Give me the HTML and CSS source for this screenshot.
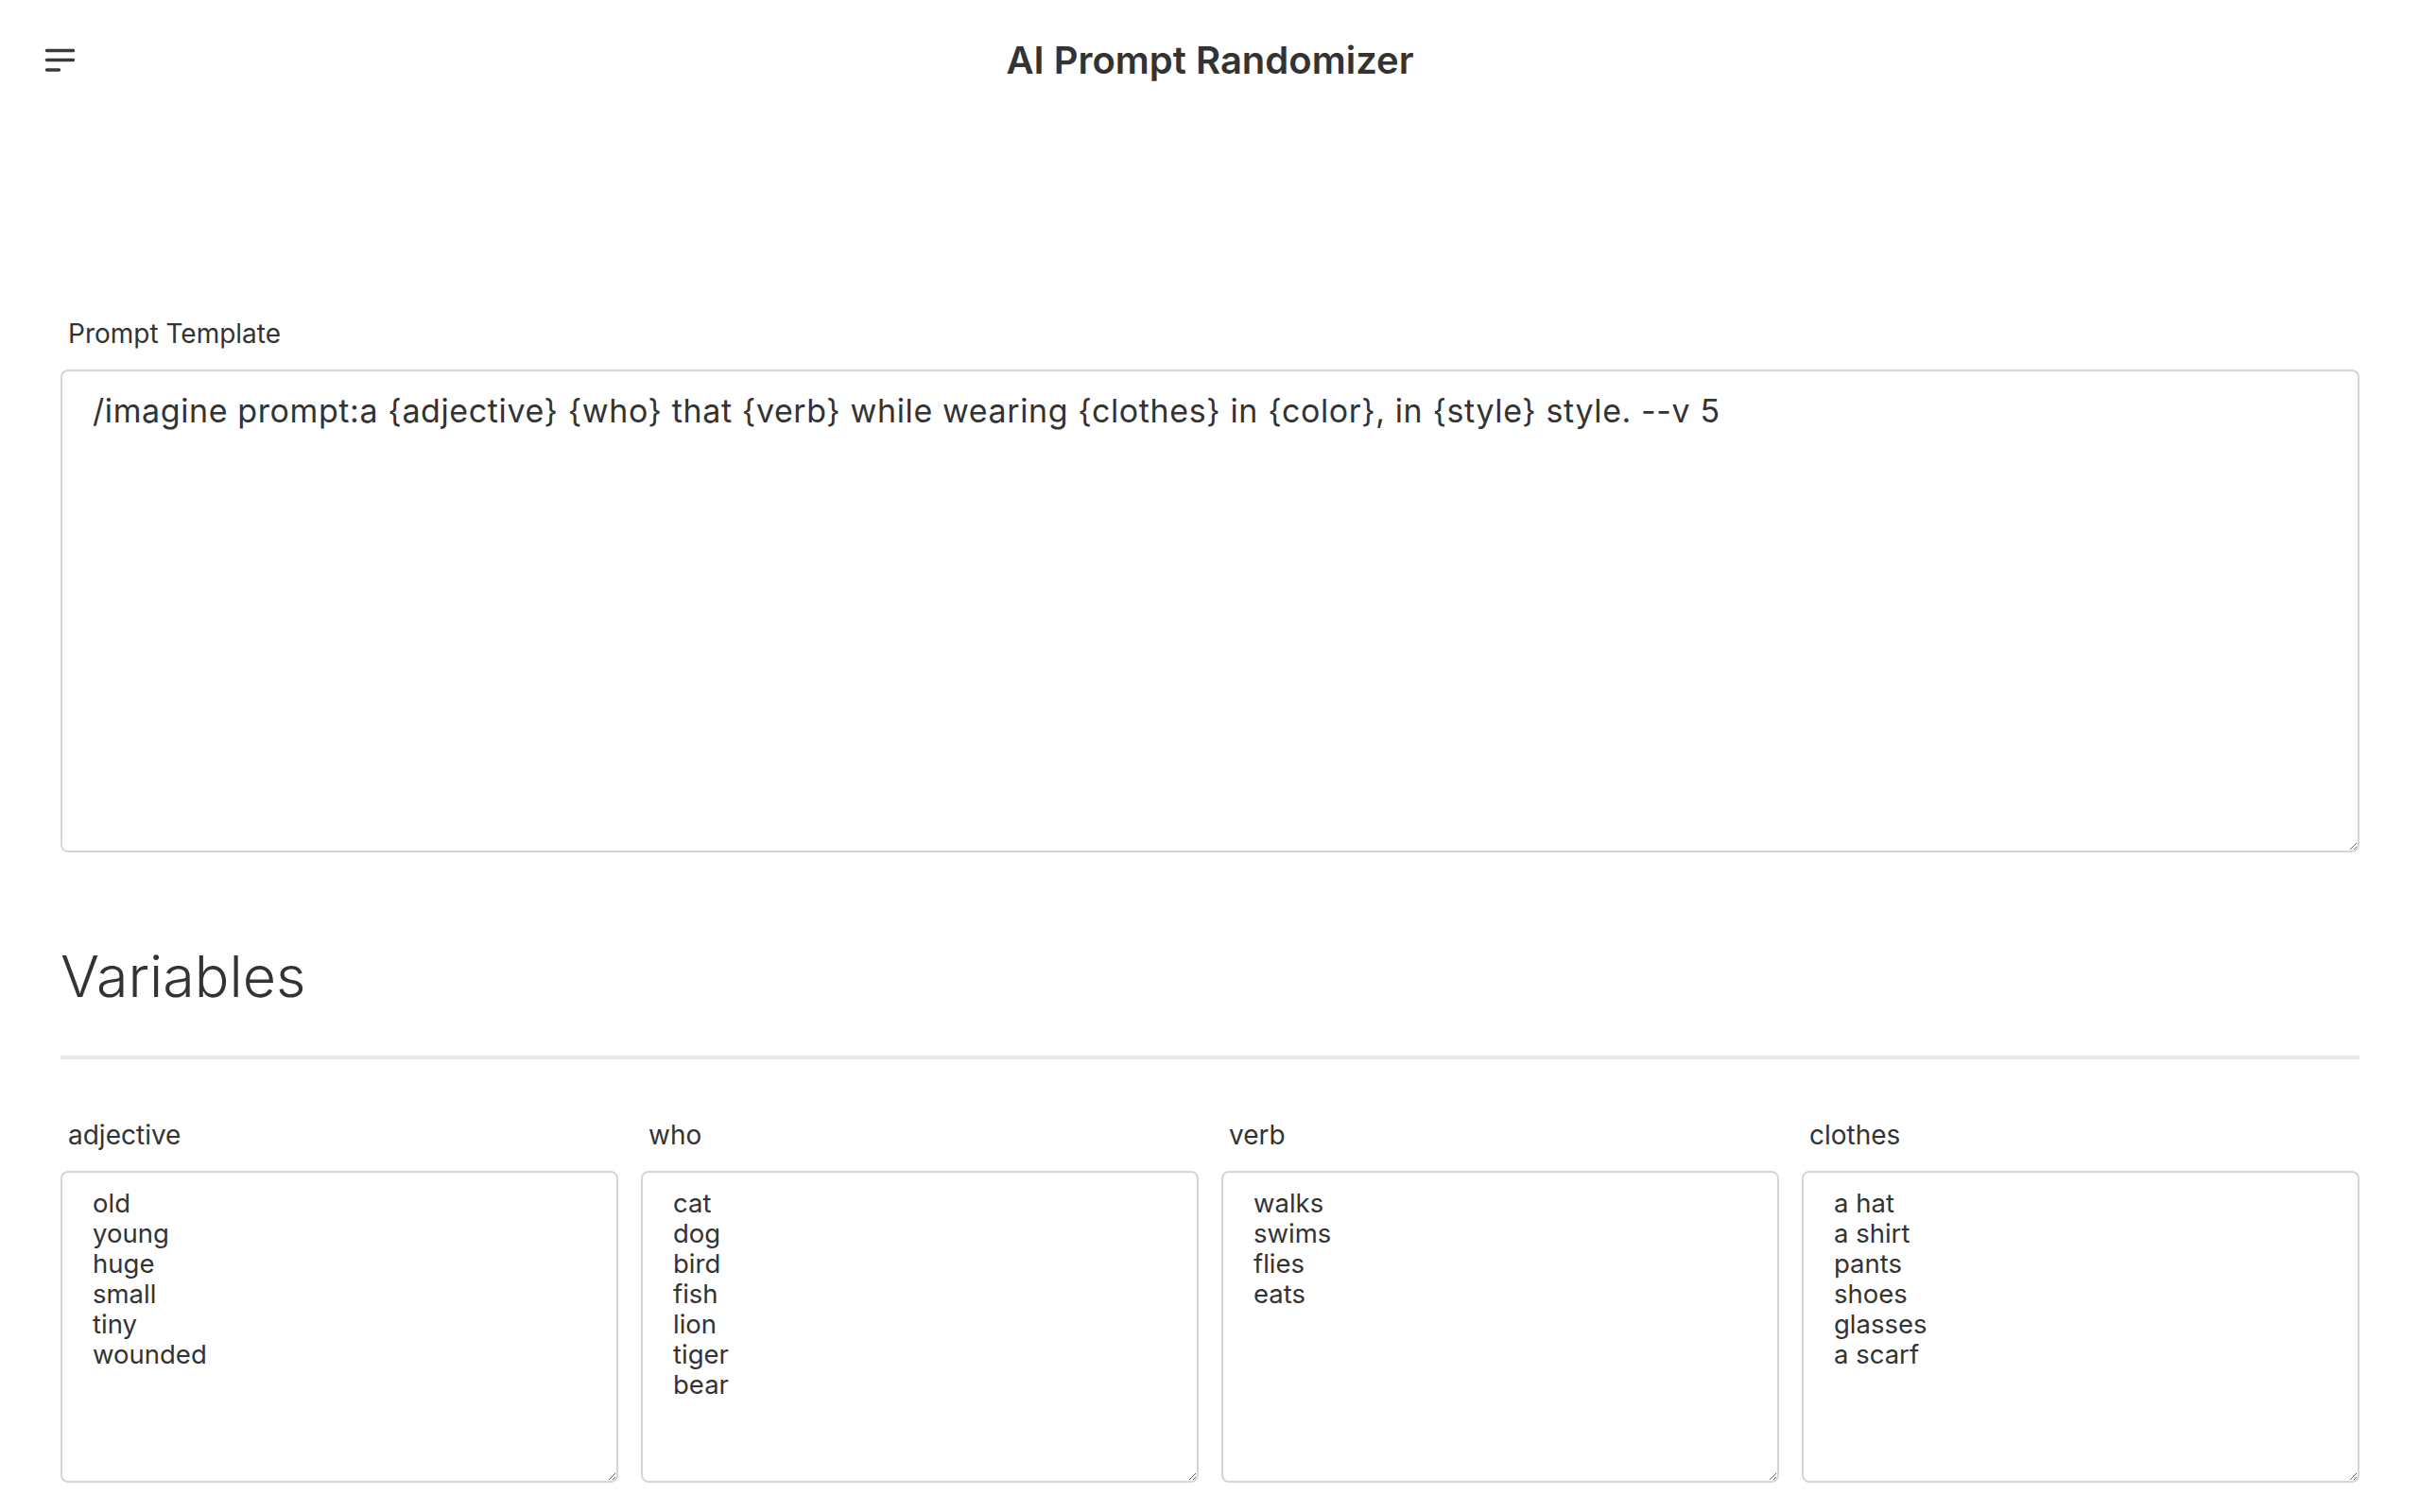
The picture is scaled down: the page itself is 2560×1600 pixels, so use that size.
FILE: index.html
```html
<!DOCTYPE html>
<html lang="en">
<head>
<meta charset="utf-8">
<title>AI Prompt Randomizer</title>
<link rel="stylesheet" href="styles.css">
</head>
<body>
<header class="topbar">
  <div class="topbar-left">
    <button class="menu-btn" aria-label="Menu">
      <svg width="32" height="32" viewBox="0 0 32 32" fill="none" stroke="#3a3a3a" stroke-width="3.4" stroke-linecap="round">
        <line x1="2.5" y1="5.5" x2="30.5" y2="5.5"/>
        <line x1="2.5" y1="15.5" x2="30.5" y2="15.5"/>
        <line x1="2.5" y1="26" x2="15.5" y2="26"/>
      </svg>
    </button>
  </div>
  <h1 class="title">AI Prompt Randomizer</h1>
  <div class="topbar-right"></div>
</header>

<main class="content">
  <section class="template">
    <label class="field-label" for="tpl">Prompt Template</label>
    <textarea id="tpl" class="template-input">/imagine prompt:a {adjective} {who} that {verb} while wearing {clothes} in {color}, in {style} style. --v 5</textarea>
  </section>

  <section class="variables">
    <h2 class="section-title">Variables</h2>
    <hr class="divider">
    <div class="var-grid">
      <div class="var-field">
        <label class="field-label" for="v-adjective">adjective</label>
        <textarea id="v-adjective" class="var-input">old
young
huge
small
tiny
wounded</textarea>
      </div>
      <div class="var-field">
        <label class="field-label" for="v-who">who</label>
        <textarea id="v-who" class="var-input">cat
dog
bird
fish
lion
tiger
bear</textarea>
      </div>
      <div class="var-field">
        <label class="field-label" for="v-verb">verb</label>
        <textarea id="v-verb" class="var-input">walks
swims
flies
eats</textarea>
      </div>
      <div class="var-field">
        <label class="field-label" for="v-clothes">clothes</label>
        <textarea id="v-clothes" class="var-input">a hat
a shirt
pants
shoes
glasses
a scarf</textarea>
      </div>
    </div>
  </section>
</main>
</body>
</html>
```

FILE: styles.css
```css
html, body {
  margin: 0;
  padding: 0;
  background: #ffffff;
}

body {
  font-family: "Inter", "Noto Sans", "Liberation Sans", sans-serif;
  color: #333333;
  overflow: hidden;
}

.topbar {
  height: 128px;
  display: grid;
  grid-template-columns: 1fr auto 1fr;
  align-items: center;
}

.topbar-left {
  padding-left: 47px;
  display: flex;
  align-items: center;
}

.menu-btn {
  border: 0;
  background: transparent;
  padding: 0;
  width: 32px;
  height: 32px;
  display: block;
  cursor: pointer;
}

.menu-btn svg {
  display: block;
}

.title {
  margin: 0;
  font-size: 40px;
  line-height: 48px;
  font-weight: 600;
  color: #333333;
  letter-spacing: 0;
}

.content {
  padding: 209px 64px 0;
}

.field-label {
  display: block;
  margin: 0 0 22px 8px;
  font-size: 28px;
  line-height: 32px;
  font-weight: 400;
  color: #333333;
}

textarea {
  display: block;
  box-sizing: border-box;
  width: 100%;
  margin: 0;
  border: 2px solid #d6d6d6;
  border-radius: 8px;
  background: #ffffff;
  color: #333333;
  font-family: "Inter", "Noto Sans", "Liberation Sans", sans-serif;
  outline: none;
  resize: vertical;
}

.template-input {
  height: 511px;
  padding: 18px 32px 13px;
  font-size: 34px;
  line-height: 48px;
  letter-spacing: 0.6px;
}

.section-title {
  margin: 95px 0 0;
  font-size: 61px;
  line-height: 72px;
  font-weight: 300;
  color: #333333;
}

.divider {
  margin: 48px 0 0;
  border: 0;
  height: 4px;
  background: #e8e8e8;
}

.var-grid {
  margin-top: 64px;
  display: grid;
  grid-template-columns: repeat(4, 1fr);
  column-gap: 24px;
}

.var-input {
  height: 330px;
  padding: 16px 32px 13px;
  font-size: 27.5px;
  line-height: 32px;
}
```
